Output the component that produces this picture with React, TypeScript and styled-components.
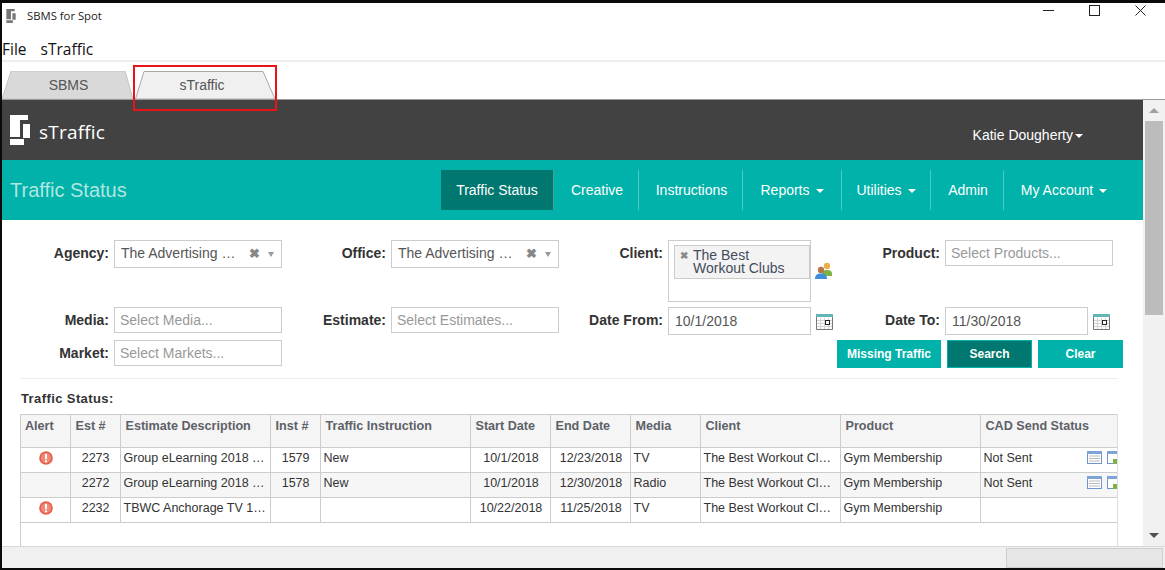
import React from "react";
import styled, { createGlobalStyle } from "styled-components";

const GlobalStyle = createGlobalStyle`
  html, body {
    margin: 0;
    padding: 0;
    background: #fff;
  }
  * {
    box-sizing: border-box;
  }
`;

const Frame = styled.div`
  width: 1165px;
  height: 570px;
  display: flex;
  flex-direction: column;
  overflow: hidden;
  background: #fff;
  border-top: 3px solid #0a0a0a;
  border-left: 2px solid #0a0a0a;
  border-bottom: 2px solid #0a0a0a;
  font-family: "Liberation Sans", Arial, sans-serif;
`;

const TitleBar = styled.div`
  height: 26px;
  flex: none;
  display: flex;
  align-items: center;
  padding-left: 4px;
  font-family: "Open Sans", sans-serif;
  font-size: 11.3px;
  color: #222;
`;

const TitleText = styled.span`
  margin: -2px 0 0 11px;
`;

const WindowButtons = styled.div`
  margin: -12px 2px 0 auto;
  display: flex;
`;

const WindowButton = styled.div`
  width: 46px;
  height: 20px;
  display: flex;
  align-items: center;
  justify-content: center;
`;

const MenuBar = styled.div`
  height: 33px;
  flex: none;
  display: flex;
  align-items: center;
  gap: 14px;
  padding-top: 8px;
  border-bottom: 2px solid #eeeeee;
  font-family: "Open Sans", sans-serif;
  font-size: 15.5px;
  color: #111;
`;

const TabStrip = styled.div`
  position: relative;
  height: 37px;
  flex: none;
  display: flex;
  align-items: flex-end;
  gap: 2px;
`;

const Tab = styled.div<{ $width: number; $inset: number }>`
  position: relative;
  width: ${(p) => p.$width}px;
  height: 28px;
  display: flex;
  align-items: center;
  justify-content: center;
  padding: 0 ${(p) => (p.$inset > 0 ? p.$inset : 0)}px 0 ${(p) => (p.$inset < 0 ? -p.$inset : 0)}px;
  font-size: 14px;
  color: #555;
  svg {
    position: absolute;
    inset: 0;
    width: 100%;
    height: 100%;
  }
  span {
    position: relative;
  }
`;

const Highlight = styled.div`
  position: absolute;
  left: 131px;
  top: 3px;
  width: 144px;
  height: 46px;
  border: 2px solid #e8141c;
  z-index: 2;
`;

const Body = styled.div`
  flex: 1;
  min-height: 0;
  display: flex;
  border-top: 1px solid #9a9a9a;
`;

const Page = styled.div`
  width: 1141px;
  display: flex;
  flex-direction: column;
`;

const BrandBar = styled.div`
  height: 60px;
  flex: none;
  background: #424242;
  display: flex;
  align-items: center;
  padding-left: 8px;
  color: #fff;
`;

const BrandName = styled.span`
  margin-left: 9px;
  margin-top: 3px;
  font-family: "Open Sans", sans-serif;
  font-size: 19px;
  letter-spacing: 0.2px;
`;

const UserMenu = styled.span`
  margin-left: auto;
  margin-right: 60px;
  margin-top: 10px;
  font-size: 14px;
  display: flex;
  align-items: center;
  gap: 2px;
`;

const Caret = styled.i`
  display: inline-block;
  width: 0;
  height: 0;
  border-left: 4px solid transparent;
  border-right: 4px solid transparent;
  border-top: 4px solid #fff;
  margin-top: 2px;
`;

const NavBar = styled.div`
  height: 60px;
  flex: none;
  background: #00b2a9;
  display: flex;
  align-items: center;
  padding: 0 17px 0 8px;
`;

const PageTitle = styled.div`
  font-size: 20px;
  color: #b0e6e2;
  margin-right: auto;
`;

const NavItem = styled.div<{ $active?: boolean; $wide?: number; $nudge?: number }>`
  height: 40px;
  width: ${(p) => p.$wide}px;
  display: flex;
  align-items: center;
  justify-content: center;
  gap: 6px;
  padding-left: ${(p) => (p.$nudge && p.$nudge > 0 ? p.$nudge : 0)}px;
  padding-right: ${(p) => (p.$nudge && p.$nudge < 0 ? -p.$nudge : 0)}px;
  font-size: 14px;
  color: #fff;
  background: ${(p) => (p.$active ? "#00776f" : "transparent")};
  border-right: 1px solid rgba(255, 255, 255, 0.3);
  &:last-child {
    border-right: none;
  }
`;

const Content = styled.div`
  flex: 1;
  min-height: 0;
  display: flex;
  flex-direction: column;
  padding-top: 20px;
`;

const FilterGrid = styled.div`
  display: grid;
  grid-template-columns: 107px 168px 99px 168px 99px 167px 100px 168px;
  grid-template-rows: 62px 28px 28px;
  gap: 5px;
  align-items: start;
`;

const Label = styled.label`
  text-align: right;
  font-size: 14px;
  line-height: 26px;
  font-weight: bold;
  color: #333;
`;

const Control = styled.div<{ $height?: number; $width?: number }>`
  height: ${(p) => p.$height ?? 26}px;
  width: ${(p) => (p.$width ? `${p.$width}px` : "100%")};
  border: 1px solid #ccc;
  background: #fff;
  display: flex;
  align-items: center;
  padding: 0 5px;
  font-size: 14px;
  color: #999;
`;

const DateBox = styled(Control)`
  color: #555;
  padding: 0 6px;
`;

const SelectBox = styled(DateBox)`
  justify-content: space-between;
  padding-bottom: 2px;
`;

const SelectValue = styled.span`
  flex: 1;
`;

const ClearMark = styled.span`
  font-size: 13px;
  font-weight: bold;
  color: #888;
  margin-right: 8px;
`;

const Arrow = styled.i`
  width: 0;
  height: 0;
  border-left: 3.5px solid transparent;
  border-right: 3.5px solid transparent;
  border-top: 5px solid #999;
  margin: 2px 1px 0 0;
`;

const ClientBox = styled(Control)`
  align-items: flex-start;
  padding: 4px 0 0 5px;
`;

const ClientTag = styled.div`
  width: 136px;
  height: 34px;
  display: flex;
  border: 1px solid #ccc;
  background: #f3f3f3;
  padding: 3px 0 0 5px;
  font-size: 14px;
  line-height: 13px;
  color: #444c5c;
  b {
    width: 13px;
    flex: none;
    font-size: 10px;
    color: #888;
    line-height: 14px;
  }
`;

const ControlRow = styled.div`
  display: flex;
  gap: 5px;
`;

const PeopleIcon = styled.svg`
  margin-top: 22px;
  margin-left: -1px;
`;

const DateIcon = styled.svg`
  margin-top: 7px;
`;

const Actions = styled.div`
  grid-column: 7 / 9;
  margin: 0 -10px 0 -3px;
  display: flex;
  gap: 6px;
  justify-content: flex-end;
`;

const ActionButton = styled.button<{ $active?: boolean; $width: number }>`
  width: ${(p) => p.$width}px;
  height: 28px;
  padding: 0;
  font-family: inherit;
  font-size: 12px;
  font-weight: bold;
  color: #fff;
  background: ${(p) => (p.$active ? "#00776f" : "#00b2a9")};
  border: 1px solid #00b2a9;
`;

const Divider = styled.div`
  height: 1px;
  flex: none;
  margin: 10px 25px 0 18px;
  background: #eeeeee;
`;

const SectionTitle = styled.div`
  margin: 12px 0 0 19px;
  height: 23px;
  flex: none;
  font-size: 13px;
  font-weight: bold;
  letter-spacing: 0.4px;
  color: #333;
`;

const TableWrap = styled.div`
  flex: 1;
  min-height: 0;
  margin-left: 18px;
  width: 1098px;
  overflow: hidden;
  border-left: 1px solid #ccc;
  border-right: 1px solid #ddd;
`;

const Table = styled.table`
  table-layout: fixed;
  width: 1130px;
  border-collapse: collapse;
  font-size: 12.5px;
  color: #333;
`;

const Head = styled.th<{ $width: number }>`
  width: ${(p) => p.$width}px;
  height: 33px;
  padding: 4px 0 0 5px;
  vertical-align: top;
  text-align: left;
  font-size: 12.6px;
  line-height: 15px;
  font-weight: bold;
  color: #5d6168;
  background: #f5f5f5;
  border: 1px solid #ccc;
  border-left: none;
  &:first-child {
    padding-left: 4px;
  }
`;

const Row = styled.tr<{ $shaded?: boolean }>`
  height: 25px;
  background: ${(p) => (p.$shaded ? "#f6f6f6" : "#fff")};
`;

const Cell = styled.td<{ $align?: string }>`
  padding: 0 ${(p) => (p.$align === "right" ? "10px" : "0")} 5px
    ${(p) => (p.$align === "center" ? "2px" : "3px")};
  text-align: ${(p) => p.$align ?? "left"};
  white-space: nowrap;
  overflow: hidden;
  border: 1px solid #ccc;
  border-left: none;
`;

const CadStatus = styled.div`
  display: flex;
  align-items: center;
  gap: 5px;
  span {
    width: 98px;
  }
`;

const ScrollBar = styled.div`
  width: 22px;
  flex: none;
  display: flex;
  flex-direction: column;
  background: #f1f1f1;
  padding: 0 2px;
`;

const ScrollButton = styled.div`
  height: 21px;
  flex: none;
  display: flex;
  align-items: center;
  justify-content: center;
`;

const ScrollThumb = styled.div`
  height: 194px;
  flex: none;
  background: #bcbcbc;
`;

const ScrollSpace = styled.div`
  flex: 1;
`;

const UpArrow = styled.i`
  width: 0;
  height: 0;
  border-left: 5px solid transparent;
  border-right: 5px solid transparent;
  border-bottom: 5px solid #a0a0a0;
`;

const DownArrow = styled.i`
  width: 0;
  height: 0;
  border-left: 5px solid transparent;
  border-right: 5px solid transparent;
  border-top: 5px solid #505050;
`;

const StatusBar = styled.div`
  height: 22px;
  flex: none;
  display: flex;
  justify-content: flex-end;
  background: #f0f0f0;
  border-top: 1px solid #d8d8d8;
  padding-right: 2px;
`;

const StatusPanel = styled.div`
  width: 157px;
  margin-top: 1px;
  background: #e6e6e6;
  border: 1px solid #cfcfcf;
`;

const LOGO_PATH = "M0 0H18V5H10V22H0ZM13 9H20V23H13ZM0 24H14V30H0Z";

const CalendarIcon = () => (
  <DateIcon width="17" height="16" viewBox="0 0 17 16">
    <rect x="0" y="0" width="17" height="16" fill="#fbfbfb" />
    <path d="M4.500 4v11M8.500 4v11M12.500 4v11M1 6.500h15M1 9.500h15M1 12.500h15" stroke="#d4d4d4" />
    <rect x="0" y="0" width="17" height="3" fill="#63b4b4" />
    <path d="M0.500 3v12.500H16.500V3" fill="none" stroke="#777" />
    <rect x="9.500" y="6.500" width="4" height="4" fill="#fff" stroke="#222" />
  </DateIcon>
);

const AlertIcon = () => (
  <svg width="14" height="14" viewBox="0 0 14 14" style={{ display: "block", margin: "0 auto" }}>
    <circle cx="7" cy="7" r="6.800" fill="#e8604c" />
    <circle cx="7" cy="7" r="5" fill="#f08a78" />
    <rect x="6" y="2.800" width="2" height="5.600" rx="1" fill="#fff" />
    <circle cx="7" cy="10.400" r="1.100" fill="#fff" />
  </svg>
);

const GridIcon = () => (
  <svg width="15" height="13" viewBox="0 0 15 13">
    <rect x="0.500" y="0.500" width="14" height="12" fill="#fff" stroke="#6d94cc" />
    <rect x="0" y="0" width="15" height="3" fill="#7ea3d6" />
    <path d="M2 5h11M2 7.500h11M2 10h11" stroke="#b9b9b9" strokeWidth="1.200" />
  </svg>
);

const SheetIcon = () => (
  <svg width="15" height="13" viewBox="0 0 15 13">
    <rect x="0.500" y="0.500" width="14" height="12" fill="#fff" stroke="#6d94cc" />
    <rect x="0" y="0" width="15" height="3" fill="#7ea3d6" />
    <rect x="6" y="8" width="9" height="5" fill="#7cb342" />
  </svg>
);

const columns: [string, number][] = [
  ["Alert", 49],
  ["Est #", 50],
  ["Estimate Description", 150],
  ["Inst #", 50],
  ["Traffic Instruction", 150],
  ["Start Date", 80],
  ["End Date", 80],
  ["Media", 70],
  ["Client", 140],
  ["Product", 140],
  ["CAD Send Status", 171],
];

const rows = [
  {
    alert: true,
    est: "2273",
    desc: "Group eLearning 2018 …",
    inst: "1579",
    instruction: "New",
    start: "10/1/2018",
    end: "12/23/2018",
    media: "TV",
    status: "Not Sent",
  },
  {
    alert: false,
    est: "2272",
    desc: "Group eLearning 2018 …",
    inst: "1578",
    instruction: "New",
    start: "10/1/2018",
    end: "12/30/2018",
    media: "Radio",
    status: "Not Sent",
  },
  {
    alert: true,
    est: "2232",
    desc: "TBWC Anchorage TV 1…",
    inst: "",
    instruction: "",
    start: "10/22/2018",
    end: "11/25/2018",
    media: "TV",
    status: "",
  },
];

const navItems = [
  { label: "Traffic Status", width: 113, active: true },
  { label: "Creative", width: 85, nudge: 2 },
  { label: "Instructions", width: 104, nudge: 2 },
  { label: "Reports", width: 99, caret: true },
  { label: "Utilities", width: 89, caret: true },
  { label: "Admin", width: 73, nudge: 2 },
  { label: "My Account", width: 122, caret: true, nudge: -2 },
];

const App: React.FC = () => {
  return (
    <Frame>
      <GlobalStyle />
      <TitleBar>
        <svg width="10" height="14" viewBox="0 0 20 30">
          <path d={LOGO_PATH} fill="#777" />
        </svg>
        <TitleText>SBMS for Spot</TitleText>
        <WindowButtons>
          <WindowButton>
            <svg width="11" height="11" viewBox="0 0 11 11">
              <path d="M0 5.500h11" stroke="#222" />
            </svg>
          </WindowButton>
          <WindowButton>
            <svg width="11" height="11" viewBox="0 0 11 11">
              <rect x="0.500" y="0.500" width="10" height="10" fill="none" stroke="#222" />
            </svg>
          </WindowButton>
          <WindowButton>
            <svg width="11" height="11" viewBox="0 0 11 11">
              <path d="M0.500 0.500l10 10M10.500 0.500l-10 10" stroke="#222" />
            </svg>
          </WindowButton>
        </WindowButtons>
      </TitleBar>
      <MenuBar>
        <span>File</span>
        <span>sTraffic</span>
      </MenuBar>
      <TabStrip>
        <Tab $width={131} $inset={-2}>
          <svg viewBox="0 0 131 28" preserveAspectRatio="none">
            <path d="M0 28L9 0H123L131 28Z" fill="#d9d9d9" stroke="#c4c4c4" />
          </svg>
          <span>SBMS</span>
        </Tab>
        <Tab $width={141} $inset={7}>
          <svg viewBox="0 0 141 28" preserveAspectRatio="none">
            <path d="M0.500 28L9 0.500H128L140 28Z" fill="#f0f0f0" stroke="#a8a8a8" />
          </svg>
          <span>sTraffic</span>
        </Tab>
        <Highlight />
      </TabStrip>
      <Body>
        <Page>
          <BrandBar>
            <svg width="20" height="30" viewBox="0 0 20 30">
              <path d={LOGO_PATH} fill="#fff" />
            </svg>
            <BrandName>sTraffic</BrandName>
            <UserMenu>
              Katie Dougherty
              <Caret />
            </UserMenu>
          </BrandBar>
          <NavBar>
            <PageTitle>Traffic Status</PageTitle>
            {navItems.map((item) => (
              <NavItem key={item.label} $active={item.active} $wide={item.width} $nudge={item.nudge}>
                {item.label}
                {item.caret && <Caret />}
              </NavItem>
            ))}
          </NavBar>
          <Content>
            <FilterGrid>
              <Label>Agency:</Label>
              <SelectBox $height={28}>
                <SelectValue>The Advertising …</SelectValue>
                <ClearMark>✖</ClearMark>
                <Arrow />
              </SelectBox>
              <Label>Office:</Label>
              <SelectBox $height={28}>
                <SelectValue>The Advertising …</SelectValue>
                <ClearMark>✖</ClearMark>
                <Arrow />
              </SelectBox>
              <Label>Client:</Label>
              <ControlRow>
                <ClientBox $height={62} $width={143}>
                  <ClientTag>
                    <b>✖</b>
                    <span>
                      The Best
                      <br />
                      Workout Clubs
                    </span>
                  </ClientTag>
                </ClientBox>
                <PeopleIcon width="18" height="18" viewBox="0 0 18 18">
                  <circle cx="12" cy="4" r="3.200" fill="#e8b04a" />
                  <path d="M7 13c0-4 2-5 5-5s5 1 5 4v2H7Z" fill="#7cb342" />
                  <circle cx="6" cy="8" r="3.200" fill="#b5764a" />
                  <path d="M0 17c0-4 2-5.500 6-5.500s6 1.500 6 5.500Z" fill="#3f8fdc" />
                </PeopleIcon>
              </ControlRow>
              <Label>Product:</Label>
              <Control>Select Products...</Control>

              <Label>Media:</Label>
              <Control>Select Media...</Control>
              <Label>Estimate:</Label>
              <Control>Select Estimates...</Control>
              <Label>Date From:</Label>
              <ControlRow>
                <DateBox $height={28} $width={143}>10/1/2018</DateBox>
                <CalendarIcon />
              </ControlRow>
              <Label>Date To:</Label>
              <ControlRow>
                <DateBox $height={28} $width={143}>11/30/2018</DateBox>
                <CalendarIcon />
              </ControlRow>

              <Label>Market:</Label>
              <Control>Select Markets...</Control>
              <Actions>
                <ActionButton $width={104}>Missing Traffic</ActionButton>
                <ActionButton $width={85} $active>Search</ActionButton>
                <ActionButton $width={85}>Clear</ActionButton>
              </Actions>
            </FilterGrid>
            <Divider />
            <SectionTitle>Traffic Status:</SectionTitle>
            <TableWrap>
              <Table>
                <thead>
                  <tr>
                    {columns.map(([name, width]) => (
                      <Head key={name} $width={width}>{name}</Head>
                    ))}
                  </tr>
                </thead>
                <tbody>
                  {rows.map((row, index) => (
                    <Row key={row.est} $shaded={index === 1}>
                      <Cell $align="center">{row.alert && <AlertIcon />}</Cell>
                      <Cell $align="right">{row.est}</Cell>
                      <Cell>{row.desc}</Cell>
                      <Cell $align="right">{row.inst}</Cell>
                      <Cell>{row.instruction}</Cell>
                      <Cell $align="center">{row.start}</Cell>
                      <Cell $align="center">{row.end}</Cell>
                      <Cell>{row.media}</Cell>
                      <Cell>The Best Workout Cl…</Cell>
                      <Cell>Gym Membership</Cell>
                      <Cell>
                        {row.status && (
                          <CadStatus>
                            <span>{row.status}</span>
                            <GridIcon />
                            <SheetIcon />
                          </CadStatus>
                        )}
                      </Cell>
                    </Row>
                  ))}
                </tbody>
              </Table>
            </TableWrap>
          </Content>
        </Page>
        <ScrollBar>
          <ScrollButton>
            <UpArrow />
          </ScrollButton>
          <ScrollThumb />
          <ScrollSpace />
          <ScrollButton>
            <DownArrow />
          </ScrollButton>
        </ScrollBar>
      </Body>
      <StatusBar>
        <StatusPanel />
      </StatusBar>
    </Frame>
  );
};

export default App;
